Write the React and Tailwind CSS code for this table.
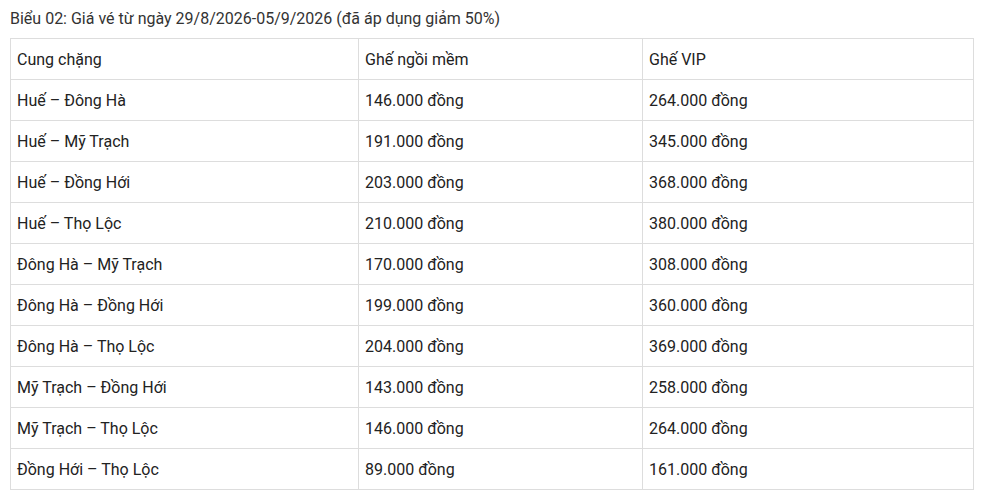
const rows = [
  ["Huế – Đông Hà", "146.000 đồng", "264.000 đồng"],
  ["Huế – Mỹ Trạch", "191.000 đồng", "345.000 đồng"],
  ["Huế – Đồng Hới", "203.000 đồng", "368.000 đồng"],
  ["Huế – Thọ Lộc", "210.000 đồng", "380.000 đồng"],
  ["Đông Hà – Mỹ Trạch", "170.000 đồng", "308.000 đồng"],
  ["Đông Hà – Đồng Hới", "199.000 đồng", "360.000 đồng"],
  ["Đông Hà – Thọ Lộc", "204.000 đồng", "369.000 đồng"],
  ["Mỹ Trạch – Đồng Hới", "143.000 đồng", "258.000 đồng"],
  ["Mỹ Trạch – Thọ Lộc", "146.000 đồng", "264.000 đồng"],
  ["Đồng Hới – Thọ Lộc", "89.000 đồng", "161.000 đồng"],
];

const cell = "h-[41px] border border-[#dddddd] pl-[6px] pr-[7px] pt-[2px] pb-0 align-middle";

export default function App() {
  return (
    <div className="min-h-screen bg-white px-[10px] pt-[7px] font-['Roboto',sans-serif] text-[#222222]">
      <p className="text-[16px] leading-[24px] text-[#333333]">
        Biểu 02: Giá vé từ ngày 29/8/2026-05/9/2026 (đã áp dụng giảm 50%)
      </p>
      <table className="mt-[7px] w-[963px] table-fixed border-collapse text-left text-[16px]">
        <colgroup>
          <col className="w-[348px]" />
          <col className="w-[284px]" />
          <col className="w-[331px]" />
        </colgroup>
        <tbody>
          <tr>
            <td className={cell}>Cung chặng</td>
            <td className={cell}>Ghế ngồi mềm</td>
            <td className={cell}>Ghế VIP</td>
          </tr>
          {rows.map((row) => (
            <tr key={row[0]}>
              {row.map((value, i) => (
                <td key={i} className={cell}>
                  {value}
                </td>
              ))}
            </tr>
          ))}
        </tbody>
      </table>
    </div>
  );
}
